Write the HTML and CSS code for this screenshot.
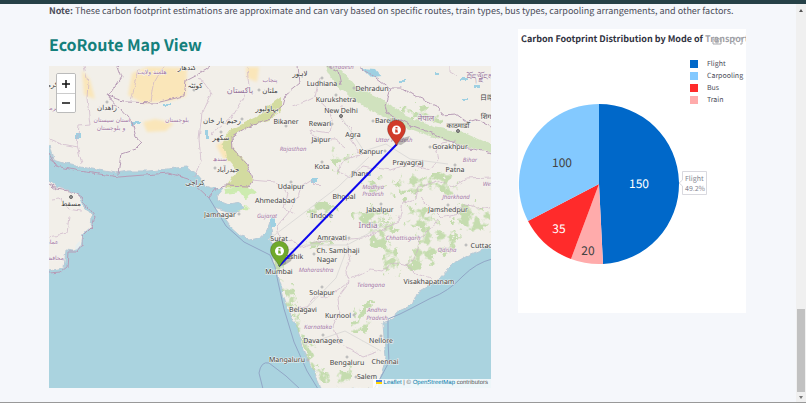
FILE: index.html
```
<!DOCTYPE html>
<html lang="en">
<head>
<meta charset="utf-8">
<meta name="viewport" content="width=device-width, initial-scale=1">
<title>EcoRoute</title>
<link rel="stylesheet" href="styles.css">
</head>
<body>
<div class="topbar"></div>
<div class="shell">
  <main class="content">
    <p class="note"><strong>Note:</strong> These carbon footprint estimations are approximate and can vary based on specific routes, train types, bus types, carpooling arrangements, and other factors.</p>
    <div class="columns">
      <section class="map-section">
        <h2>EcoRoute Map View</h2>
        <div class="map">
          <svg class="map-canvas" viewBox="49 66 442 322" preserveAspectRatio="xMidYMid slice" role="img" aria-label="Route from Mumbai to Lucknow">
            <defs>
              <filter id="rough" x="-5%" y="-5%" width="110%" height="110%" color-interpolation-filters="sRGB">
                <feTurbulence type="fractalNoise" baseFrequency=".12" numOctaves="3" seed="4"/>
                <feDisplacementMap in="SourceGraphic" scale="5" xChannelSelector="R" yChannelSelector="G"/>
              </filter>
              <filter id="scatter" x="-5%" y="-5%" width="110%" height="110%" color-interpolation-filters="sRGB">
                <feTurbulence type="fractalNoise" baseFrequency=".1" numOctaves="4" seed="9" result="noise"/>
                <feDisplacementMap in="SourceGraphic" in2="noise" scale="26" xChannelSelector="R" yChannelSelector="G" result="shape"/>
                <feColorMatrix in="noise" values="0 0 0 0 0 0 0 0 0 0 0 0 0 0 0 0 0 7 0 -2.9" result="holes"/>
                <feComposite in="shape" in2="holes" operator="in"/>
                <feGaussianBlur stdDeviation=".5"/>
              </filter>
              <filter id="soft"><feGaussianBlur stdDeviation="1.5"/></filter>
              <clipPath id="land"><path d="M49 66H492V245L486 248 469 255 452 265 436 282 417 293 412 305 397 312 394 318 383 323 384 338 386 358 381 375 377 389H322L319 382 306 355 297 328 286 305 279 278 274 262 272 235 270 222 267 230 262 237 249 240 240 235 229 225 222 215 213 207 225 210 234 212 245 208 241 203 228 205 218 201 217 194 223 187 212 188 206 186 196 174 187 167 176 168 149 171 129 171 116 173 86 168 66 164 53 160 49 145Z"/></clipPath>
            </defs>
            <rect class="sea" x="40" y="60" width="460" height="335"/>
            <g filter="url(#rough)">
              <path class="land" d="M40 58H500V244L486 248 469 255 452 265 436 282 417 293 412 305 397 312 394 318 383 323 384 338 386 358 381 375 377 395H323L319 382 306 355 297 328 286 305 279 278 274 262 272 235 270 222 267 230 262 237 249 240 240 235 229 225 222 215 213 207 225 210 234 212 245 208 241 203 228 205 218 201 217 194 223 187 212 188 206 186 196 174 187 167 176 168 149 171 129 171 116 173 86 168 66 164 53 160 49 145 40 140Z"/>
              <path class="land" d="M40 179 49 181 56 187 69 190 79 197 84 207 92 216 91 227 82 235 80 246 74 251 66 250 64 268 49 271 40 271Z"/>
            </g>
            <g clip-path="url(#land)">
              <g class="desert" filter="url(#soft)">
                <path d="M132 73 148 67 187 68 186 96 170 101 142 103 128 95Z"/>
                <path d="M82 70 90 80 95 99 84 95ZM143 122 155 119 174 123 166 131 147 132ZM216 145 229 139 237 162 224 160ZM246 67 259 67 257 82 247 78Z"/>
              </g>
              <g class="woods" filter="url(#scatter)">
                <path d="M400 109 420 108 440 117 438 121 415 118ZM330 160 342 153 350 158 339 166 335 178ZM360 183 383 178 385 189 370 192ZM302 210 330 204 342 213 323 220 306 217ZM355 213 380 207 388 215 369 226 358 224ZM393 181 416 174 449 174 460 188 448 196 435 186 418 197 399 191ZM400 203 426 208 438 220 429 231 412 222ZM448 212 476 204 492 214 486 231 460 230ZM371 222 392 218 400 230 387 238 400 252 397 276 387 270 382 248 369 242ZM418 230 434 226 445 239 438 252 423 270 409 273 407 259 416 247ZM438 237 459 233 455 250 442 255ZM270 242 280 255 284 280 294 300 302 324 309 348 320 369 337 380 331 388 316 377 303 347 292 319 283 294 276 269ZM360 307 370 300 367 320 361 337 355 330ZM335 374 356 365 349 386 337 388ZM303 242 328 243 333 247 308 249Z"/>
              </g>
              <path class="foothills" filter="url(#rough)" d="M326 66 339 67 355 86 382 99 406 116 434 127 466 133 492 145 492 152 460 145 430 136 402 126 373 112 349 96 334 83Z"/>
              <path class="fresh" filter="url(#rough)" d="M224 188 247 186 256 191 245 200 239 192 226 194ZM230 207 246 205 250 209 237 210Z"/>
              <path class="rann" filter="url(#rough)" d="M281 96 270 104 257 117 232 129 222 142 226 157 237 171 226 187H249L252 180 246 161 233 148 232 136 246 127 269 120 281 111Z"/>
              <g class="lakes" filter="url(#rough)">
                <path d="M362 68 376 69 382 77 372 78ZM399 80h6v3h-6zM434 72h5v2h-5zM461 78h7v3h-7zM474 85h5v3h-5zM312 179h5v3h-5zM270 218h5v10h-5zM131 122h9v3h-9zM76 133h5v6h-5zM163 104h8v2h-8zM205 130h3v8h-3zM462 98h6v2h-6z"/>
              </g>
            </g>
            <path class="shoal" d="M75 250q0-6 5-9q1 7-5 9Z"/>
            <g class="borders" filter="url(#rough)">
              <path d="M117 66 121 77 108 96 126 102 156 103 184 96 186 80 205 70 210 66"/>
              <path d="M108 96 128 118 133 125 136 138 142 143 136 149 121 154 118 175"/>
              <path d="M49 154 56 166 79 171 119 177 169 173 189 179 209 198 217 188 226 185 249 186 253 180 247 164 233 149 232 136 246 127 268 119 282 106 285 95 300 83 298 66"/>
              <path d="M49 184 56 189 69 191 81 198 87 207 95 217 92 227 82 237 82 245 76 252 68 252 67 268 62 272 49 273"/>
              <path d="M360 67 372 75 389 88 402 88 417 97 436 105 442 115 456 114 467 122 477 119 492 127M390 88 385 105 387 113 408 124 432 133 460 146 492 153M327 66 338 71 341 85"/>
            </g>
            <g class="maritime">
              <path d="M209 198 226 226 244 242 270 255 275 267 278 282 284 309 294 342 307 371 318 389M263 389 259 373Q261 361 269 363L286 376 300 389M492 259Q476 263 463 276 448 292 431 298L410 309 400 314 388 319V340L389 362 381 377 374 389"/>
            </g>
            <g class="states" filter="url(#rough)">
              <path d="M84 66 88 82 87 99 90 125 79 126 77 145 82 164M49 139 61 144 77 147M139 69 131 101M164 66 155 81 151 101M199 78 211 93 202 113 199 139 201 161 194 177M247 68 249 86 243 99 231 118 210 134M292 106 305 102 315 97 319 79M315 97 325 105 332 120 330 133 310 130 314 138 335 139 346 148M342 106 341 119 352 130 350 139 361 155M361 155 345 159 337 171 349 177 362 166 390 170 409 164 430 170 438 161 436 151M436 151 442 143 456 141M320 188 312 180 301 187 296 202 290 211 277 226 280 242 293 240 298 248 315 242 339 240 362 238 384 229 399 221 403 203 416 199 418 187 438 181M438 181 452 187 466 179 491 178M420 199 430 207 441 218 459 214 465 205 491 209M346 244 350 260 345 273 349 282 335 292 326 298 318 294 307 307 292 309M349 282 337 298 339 312 333 326 339 344 351 349 363 356 377 351M350 279 370 269 382 271 394 262 407 265 417 253 420 238 431 230 438 219M406 265 416 274 431 278M252 180 275 182 287 192 283 208 296 214"/>
              <path d="M450 66V72L457 76M51 199 59 198 69 209 81 211M49 237 67 233 69 216"/>
            </g>
            <g class="roads"><path d="M341 117 352 133 364 151 386 144 410 159 448 164M268 240 301 215 338 187 369 157M274 254 305 245 347 245 388 223M303 312 336 278 348 246M304 345 345 331 381 351"/></g>

            <g class="places">
              <circle cx="341" cy="116" r="1.500"/><circle cx="458" cy="131" r="1.500"/><circle cx="71" cy="197" r="1.500"/>
            </g>
            <g class="dots">
              <circle cx="322" cy="78" r="1"/><circle cx="354" cy="88" r="1"/><circle cx="336" cy="95" r="1"/><circle cx="373" cy="121" r="1"/><circle cx="286" cy="126" r="1"/><circle cx="332" cy="124" r="1"/><circle cx="430" cy="147" r="1"/><circle cx="385" cy="151" r="1"/><circle cx="455" cy="165" r="1"/><circle cx="322" cy="162" r="1"/><circle cx="291" cy="182" r="1"/><circle cx="381" cy="204" r="1"/><circle cx="448" cy="205" r="1"/><circle cx="349" cy="238" r="1"/><circle cx="314" cy="254" r="1"/><circle cx="322" cy="287" r="1"/><circle cx="354" cy="315" r="1"/><circle cx="323" cy="335" r="1"/><circle cx="381" cy="336" r="1"/><circle cx="347" cy="357" r="1"/><circle cx="239" cy="214" r="1"/><circle cx="242" cy="119" r="1"/><circle cx="259" cy="90" r="1"/><circle cx="107" cy="102" r="1"/><circle cx="215" cy="168" r="1"/><circle cx="221" cy="132" r="1"/><circle cx="466" cy="245" r="1"/><circle cx="308" cy="360" r="1"/><circle cx="356" cy="377" r="1"/><circle cx="194" cy="90" r="1"/>
            </g>
            <g class="cities">
              <text x="322" y="86">Ludhiana</text><text x="372" y="91">Dehradun</text><text x="336" y="102">Kurukshetra</text><text x="341" y="113">New Delhi</text><text x="286" y="124">Bikaner</text><text x="320" y="126">Rewari</text><text x="387" y="123">Bareilly</text><text x="321" y="142">Jaipur</text><text x="353" y="137">Agra</text><text x="371" y="154">Kanpur</text><text x="450" y="149">Gorakhpur</text><text x="408" y="165">Prayagraj</text><text x="455" y="172">Patna</text><text x="322" y="169">Kota</text><text x="361" y="176">Jhansi</text><text x="291" y="189">Udaipur</text><text x="275" y="203">Ahmedabad</text><text x="344" y="199">Bhopal</text><text x="380" y="212">Jabalpur</text><text x="448" y="212">Jamshedpur</text><text x="322" y="218">Indore</text><text x="220" y="217">Jamnagar</text><text x="279" y="241">Surat</text><text x="332" y="240">Amravati</text><text x="292" y="259">Nashik</text><text x="338" y="253">Ch. Sambhaji</text><text x="327" y="262">Nagar</text><text x="279" y="274">Mumbai</text><text x="322" y="295">Solapur</text><text x="429" y="284">Visakhapatnam</text><text x="303" y="312">Belagavi</text><text x="338" y="318">Kurnool</text><text x="323" y="343">Davanagere</text><text x="381" y="343">Nellore</text><text x="287" y="362">Mangaluru</text><text x="347" y="365">Bengaluru</text><text x="385" y="364">Chennai</text><text x="367" y="379">Salem</text><text x="355" y="393">Tamil Nadu</text><text x="483" y="248">Cuttack</text>
            </g>
            <g class="cities arabic">
              <text x="187" y="70">كندهار</text><text x="195" y="88">كوئٹہ</text><text x="107" y="110">زاهدان</text><text x="222" y="123">رحیم یار خان</text><text x="221" y="140">سکھر</text><text x="228" y="172">حیدرآباد</text><text x="195" y="185">كراچی</text><text x="71" y="206">مسقط</text><text x="267" y="111">بہاولپور</text><text x="270" y="93">ملتان</text><text x="300" y="76">لاہور</text><text x="49" y="87">کرمان</text>
            </g>
            <g class="cities">
              <text x="458" y="128">काठमाडौँ</text><text x="487" y="119">शिगा</text><text x="487" y="100">日喀</text>
            </g>
            <g class="regions">
              <text x="343" y="69">Pradesh</text><text x="293" y="151">Rajasthan</text><text x="394" y="142">Uttar Pradesh</text><text x="470" y="162">Bihar</text><text x="373" y="189">Madhya</text><text x="373" y="196">Pradesh</text><text x="456" y="199">Jharkhand</text><text x="489" y="186">West</text><text x="267" y="218">Gujarat</text><text x="403" y="240">Chhattisgarh</text><text x="447" y="252">Odisha</text><text x="316" y="272">Maharashtra</text><text x="371" y="287">Telangana</text><text x="377" y="312">Andhra</text><text x="377" y="320">Pradesh</text><text x="318" y="329">Karnataka</text>
            </g>
            <g class="regions arabic">
              <text x="152" y="74">هلمند ولایت</text><text x="177" y="122">بلوچستان</text><text x="112" y="122">استان سیستان</text><text x="111" y="130">و بلوچستان</text><text x="220" y="161">سندھ</text><text x="51" y="110">کرمان</text><text x="52" y="244">عمان</text><text x="54" y="260">محافظة</text><text x="270" y="82">پنجاب</text>
            </g>
            <g class="countries">
              <text x="368" y="228">India</text><text x="240" y="93" class="arabic">پاکستان</text><text x="426" y="121">नेपाल</text><text x="480" y="80">བོད་ལྗོངས</text>
            </g>

            <path class="shadow" d="M279 266 286 258 294 253 291 261 285 265ZM396 144 403 138 410 136 407 141 401 145Z"/>
            <path class="route" d="M279 266 397 144"/>
            <g transform="translate(279.500 267)">
              <path class="pin green" d="M0 0C-2-6-9-10-9-17A9 9 0 0 1 9-17C9-10 2-6 0 0Z"/>
              <circle class="pin-dot" cy="-16" r="4.500"/><path class="pin-i green" d="M-1-19H1V-17.500H-1ZM-1.500-16.500H1V-14.500H1.500V-13.500H-1.500V-14.500H-1V-15.500H-1.500Z"/>
            </g>
            <g transform="translate(396.500 146)">
              <path class="pin red" d="M0 0C-2-6-9-10-9-17A9 9 0 0 1 9-17C9-10 2-6 0 0Z"/>
              <circle class="pin-dot" cy="-16" r="4.500"/><path class="pin-i red" d="M-1-19H1V-17.500H-1ZM-1.500-16.500H1V-14.500H1.500V-13.500H-1.500V-14.500H-1V-15.500H-1.500Z"/>
            </g>
          </svg>
          <div class="zoom">
            <button type="button" aria-label="Zoom in"><svg viewBox="0 0 10 10"><path d="M1 5H9M5 1V9"/></svg></button>
            <button type="button" aria-label="Zoom out"><svg viewBox="0 0 10 10"><path d="M1 5H9"/></svg></button>
          </div>
          <div class="attribution">
            <a href="#leaflet"><svg class="flag" viewBox="0 0 6 4"><path fill="#4c7be1" d="M0 0h6v2H0z"/><path fill="#ffd500" d="M0 2h6v2H0z"/></svg> Leaflet</a> | © <a href="#osm">OpenStreetMap</a> contributors
          </div>
        </div>
      </section>
      <section class="chart">
        <div class="chart-head">
          <h3>Carbon Footprint Distribution by Mode of Transport</h3>
          <div class="modebar">
            <button type="button" aria-label="Download plot"><svg viewBox="0 0 10 8"><path d="M1 2H3L4 1H6L7 2H9V7H1Z"/><circle cx="5" cy="4.500" r="1.500"/></svg></button>
            <button type="button" aria-label="Fullscreen"><svg viewBox="0 0 10 8"><path d="M1 3V1H3M7 1H9V3M9 5V7H7M3 7H1V5"/></svg></button>
          </div>
        </div>
        <ul class="legend">
          <li><i class="flight"></i>Flight</li>
          <li><i class="carpooling"></i>Carpooling</li>
          <li><i class="bus"></i>Bus</li>
          <li><i class="train"></i>Train</li>
        </ul>
        <svg class="pie" viewBox="0 0 228 158" role="img" aria-label="Carbon footprint by mode">
          <path class="flight" d="M81 78V-2A80 80 0 0 1 85 157.900Z"/>
          <path class="train" d="M81 78 85 157.900A80 80 0 0 1 53 153Z"/>
          <path class="bus" d="M81 78 53 153A80 80 0 0 1 10 115Z"/>
          <path class="carpooling" d="M81 78 10 115A80 80 0 0 1 81-2Z"/>
          <text class="on-dark" x="121" y="82">150</text>
          <text x="44" y="61">100</text>
          <text class="on-dark" x="41" y="127">35</text>
          <text x="70" y="149">20</text>
          <path class="tip" d="M164.500 65.500H188.500V88.500H164.500V80L161 77 164.500 74Z"/>
          <text class="tip-text" x="167" y="75">Flight</text>
          <text class="tip-text" x="167" y="85">49.2%</text>
        </svg>
      </section>
    </div>
  </main>
  <div class="scrollbar"><span class="arrow up"></span><span class="thumb"></span><span class="arrow down"></span></div>
</div>
</body>
</html>
```
FILE: styles.css
```
* { box-sizing: border-box; }
body {
  margin: 0;
  min-height: 100vh;
  display: flex;
  flex-direction: column;
  background: #f5f7fb;
  color: #4b4d59;
  font-family: "Noto Sans CJK SC", "Noto Sans", sans-serif;
  text-rendering: geometricPrecision;
  border-bottom: 1px solid #999;
}
.topbar { height: 4px; background: #264147; }
.shell { flex: 1; display: flex; }
.content { flex: 1; min-width: 0; padding: 0 50px 0 49px; }
.note { margin: 0; padding-top: 1px; font-size: 9px; line-height: 12px; white-space: nowrap; }
.columns {
  display: grid;
  grid-template-columns: 442fr 228fr;
  gap: 27px;
  align-items: start;
  padding-top: 12px;
}
h2 { margin: 0; padding: 3px 0 10px; font-size: 16px; line-height: 24px; color: #14807c; }
.map { position: relative; height: 322px; overflow: hidden; background: #aad3df; }
.map-canvas { display: block; width: 100%; height: 100%; }
.sea { fill: #aad3df; }
.land { fill: #f2efe9; stroke: #b9c9d6; stroke-width: 1; }
.desert { fill: #fae6b9; }
.woods { fill: #b9d8a0; opacity: .8; }
.foothills { fill: #c8dfb4; opacity: .8; }
.fresh { fill: #cdebb0; }
.rann { fill: #d3dba0; }
.lakes { fill: #9ed0e2; }
.shoal { fill: #e7eff0; }
.borders, .maritime, .states, .roads { fill: none; }
.borders { stroke: #b79bb6; stroke-width: 1; }
.maritime { stroke: #91a6c6; stroke-width: 1; }
.states { stroke: #cdb4c9; stroke-width: 1; opacity: .7; }
.roads { stroke: #dddbd9; stroke-width: 1; }
.places { fill: #999; stroke: #666; }
.dots { fill: #fff; stroke: #aaa; stroke-width: 1; }
.cities, .regions, .countries {
  font-family: "Noto Sans", "DejaVu Sans", "Noto Sans CJK SC", sans-serif;
  font-size: 7px;
  fill: #404040;
  text-anchor: middle;
  stroke: #f7f5f1;
  stroke-width: 1px;
  paint-order: stroke;
}
.regions { font-size: 6px; font-style: italic; fill: #a276a4; }
.countries { font-size: 8px; fill: #95729a; }
.arabic { font-family: "DejaVu Sans", sans-serif; font-style: normal; }
.shadow { fill: #333; opacity: .3; }
.route { stroke: #0c06ee; stroke-width: 2; }
.green { fill: #70a92b; }
.red { fill: #d13b2a; }
.pin { stroke: #0003; stroke-width: 1; }
.pin-dot { fill: #fff; }
.zoom {
  position: absolute;
  top: 7px;
  left: 7px;
  width: 20px;
  border: 1px solid #bbb;
  border-radius: 2px;
  overflow: hidden;
}
button { margin: 0; padding: 0; border: 0; }
.zoom button { display: grid; place-items: center; width: 100%; height: 19px; background: #fff; }
.zoom button + button { border-top: 1px solid #ccc; }
.zoom svg { width: 10px; height: 10px; stroke: #111; stroke-width: 1.5; }
.attribution {
  position: absolute;
  right: 0;
  bottom: 0;
  padding: 0 3px;
  background: #fffc;
  color: #555;
  font: 6px/9px "Liberation Sans", sans-serif;
}
.attribution a { color: #0078a8; text-decoration: none; }
.flag { width: 6px; height: 4px; }
.chart { background: #fff; padding-bottom: 49px; overflow: hidden; }
.chart-head { position: relative; height: 29px; overflow: hidden; }
h3 { margin: 0; padding-left: 3px; font-size: 9px; line-height: 20px; color: #31333f; white-space: nowrap; }
.modebar {
  position: absolute;
  top: 4px;
  right: 0;
  display: flex;
  gap: 11px;
  width: 41px;
  height: 16px;
  padding: 4px 4px 4px 7px;
  background: #fff8;
}
.modebar button { background: none; width: 10px; height: 8px; }
.modebar svg { display: block; width: 10px; height: 8px; fill: none; stroke: #a9aaae; stroke-width: 1; }
.legend { width: 56px; margin: 0 0 0 auto; padding: 0; list-style: none; font-size: 7px; line-height: 12px; }
.legend li { display: flex; align-items: center; gap: 9px; }
.legend i { width: 8px; height: 8px; }
.flight { background: #0068c9; fill: #0068c9; }
.carpooling { background: #83c9ff; fill: #83c9ff; }
.bus { background: #ff2b2b; fill: #ff2b2b; }
.train { background: #ffabab; fill: #ffabab; }
.pie { display: block; width: 100%; overflow: visible; font-size: 12px; text-anchor: middle; fill: #444; }
.pie .on-dark { fill: #fff; }
.pie .tip { fill: #fff; stroke: #d9d9df; stroke-width: 1; }
.pie .tip-text { font-size: 7px; text-anchor: start; fill: #858792; }
.scrollbar {
  display: flex;
  flex-direction: column;
  align-items: center;
  width: 10px;
  padding: 5px 0 3px;
  background: #f0f0f0;
}
.arrow { border: 2px solid transparent; }
.up { border-top: 0; border-bottom: 3px solid #555; }
.down { margin-top: 4px; border-bottom: 0; border-top: 3px solid #777; }
.thumb { width: 8px; height: 83px; margin-top: auto; background: #c1c1c1; }
```
